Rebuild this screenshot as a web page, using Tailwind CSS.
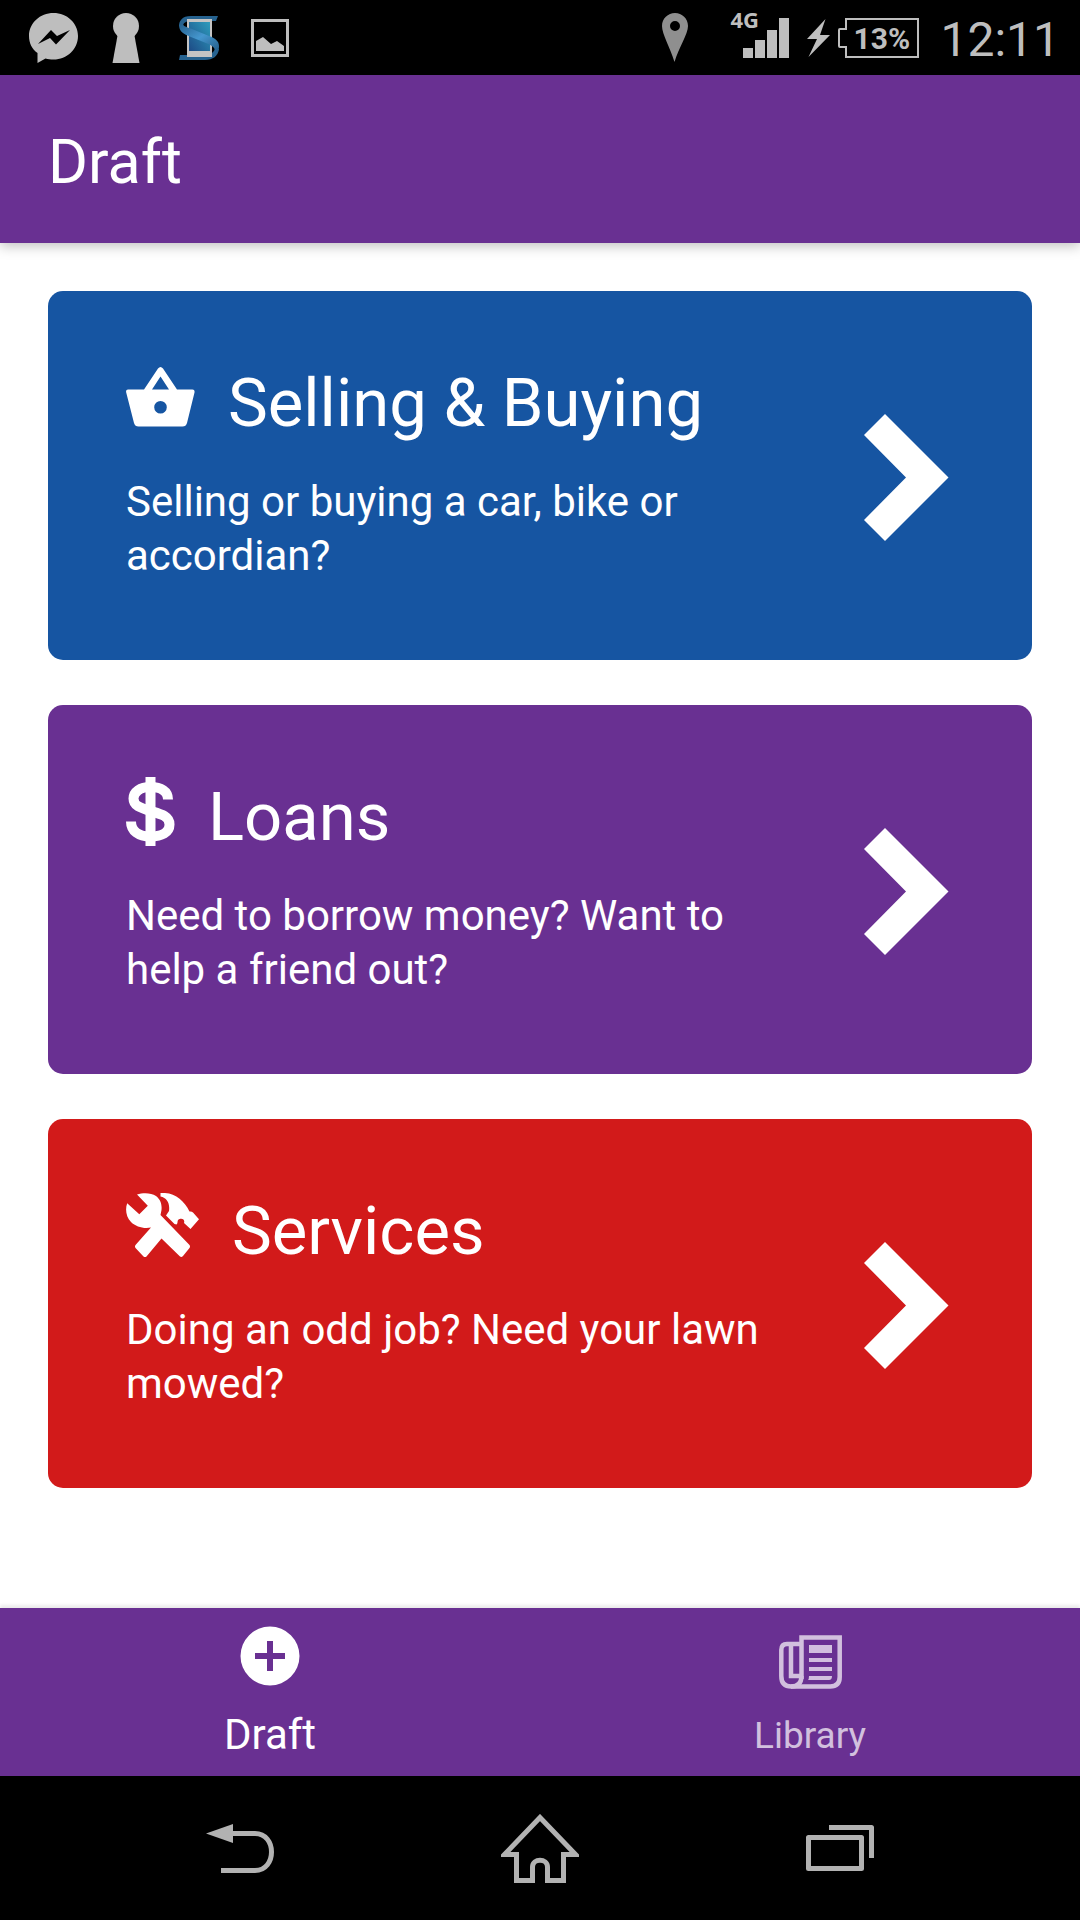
<!DOCTYPE html>
<html lang="en">
<head>
    <meta charset="UTF-8">
    <meta name="viewport" content="width=device-width, initial-scale=1.0">
    <title>Draft</title>
    <script src="https://cdn.jsdelivr.net/npm/@tailwindcss/browser@4"></script>
</head>
<body class="bg-white font-['Roboto',sans-serif] flex flex-col min-h-screen">
    <!-- Status bar -->
    <div class="bg-black text-[#bebebe] h-[75px] flex items-center justify-between pl-[29px] pr-[20px]">
        <div class="flex items-center">
            <svg class="w-[50px] h-[50px]" viewBox="0 0 50 50" fill="currentColor">
                <path d="M24.500 0C11 0 0 10 0 23c0 7 3 13 8.500 17v10l8-4.500c2.500.7 5 1 8 1C38 46.500 49 36 49 23S38 0 24.500 0z"/>
                <path fill="#000" d="M9 31 22 17l6 6 13-6-14 14.500-6-6.500z"/>
            </svg>
            <svg class="w-[28px] h-[50px] ml-[33px]" viewBox="0 0 28 50" fill="currentColor">
                <circle cx="14" cy="13" r="13"/>
                <path d="M6 20h16l5.500 30H.5z"/>
            </svg>
            <svg class="w-[40px] h-[46px] ml-[39px]" viewBox="0 0 40 46">
                <defs>
                    <linearGradient id="screen" x1="1" y1="0" x2="0" y2="1">
                        <stop offset="0" stop-color="#2d9cbc"/>
                        <stop offset="1" stop-color="#1d4a86"/>
                    </linearGradient>
                    <linearGradient id="ribbon" x1="0" y1="0" x2="1" y2="1">
                        <stop offset="0" stop-color="#245f8c"/>
                        <stop offset=".5" stop-color="#4597cf"/>
                        <stop offset="1" stop-color="#225a86"/>
                    </linearGradient>
                </defs>
                <path d="M39 1H12C3 1 0 6 0 11h4c0-3 3-5 8-5h25zM1 40h24c6 0 9-2 11-6h4c-1 7-6 11-14 11H0z" fill="#26628f"/>
                <rect x="8" y="4" width="25" height="38" fill="#c4c4c4"/>
                <rect x="10" y="7" width="21" height="29" fill="url(#screen)"/>
                <path d="M0 10c0 6 4 9 12 12l15 6c7 3 9 5 9 8l2 1c2-2 2-4 2-6 0-5-4-8-10-10L13 14C7 12 4 11 4 9z" fill="url(#ribbon)"/>
            </svg>
            <svg class="w-[38px] h-[38px] ml-[32px]" viewBox="0 0 38 38" fill="currentColor">
                <path fill-rule="evenodd" d="M0 0h38v38H0zM3 3v32h32V3z"/>
                <path d="M5 22l7-4 8 7 6-3 7 5v5H5z"/>
            </svg>
        </div>
        <div class="flex items-center">
            <svg class="w-[26px] h-[49px] text-[#8f8f8f]" viewBox="0 0 26 49" fill="currentColor">
                <path fill-rule="evenodd" d="M13 0C6 0 0 5.500 0 13c0 8 8 21 12.500 36C17 34 26 21 26 13 26 5.500 20 0 13 0zm0 8a5 5 0 110 10 5 5 0 010-10z"/>
            </svg>
            <div class="relative ml-[55px]">
                <span class="absolute left-[-13px] top-[-12px] text-[22px] leading-[26px] font-bold font-['Noto_Sans',sans-serif]">4G</span>
                <svg class="w-[46px] h-[40px]" viewBox="0 0 46 40" fill="currentColor">
                    <path d="M0 30h10v10H0zM12 22h10v18H12zM24 12h10v28H24zM36 0h10v40H36z"/>
                </svg>
            </div>
            <svg class="w-[23px] h-[38px] ml-[18px]" viewBox="0 0 23 38" fill="currentColor">
                <path d="M18.500 0 0 20h10L1.500 38 23 16H13z"/>
            </svg>
            <div class="relative ml-[8px] w-[81px] h-[40px]">
                <svg class="absolute inset-0" viewBox="0 0 81 40" fill="none" stroke="currentColor" stroke-width="2">
                    <path d="M8 1h72v38H8V29H2q-1 0-1-1V12q0-1 1-1h6z"/>
                </svg>
                <span class="absolute left-[15px] top-[3px] text-[30px] leading-[36px] font-bold">13%</span>
            </div>
            <span class="ml-[21px] pt-1 text-[48px] leading-[56px]">12:11</span>
        </div>
    </div>

    <!-- Title bar -->
    <header class="relative bg-[#693092] h-[168px] px-12 pt-1.5 flex items-center shadow-[0_3px_12px_rgba(0,0,0,0.25)]">
        <h1 class="text-white text-[61px] leading-[72px]">Draft</h1>
    </header>

    <!-- Draft categories -->
    <main class="flex-1 px-12 py-12 flex flex-col gap-[45px] text-white">
        <a href="#selling" class="bg-[#1655a2] rounded-[15px] pl-[78px] pr-[83px] pt-[75px] pb-[72px] flex items-center justify-between">
            <div class="w-[660px] pb-[5px]">
                <h2 class="flex items-center gap-[33px] h-[74px] text-[67px] leading-[74px]">
                    <svg class="w-[69px] h-[60px] mb-3" viewBox="0 0 69 60" fill="currentColor">
                        <path fill-rule="evenodd" d="M2 22.500h16L32 1.500q2.500-3 5 0L51 22.500h15.500q2.500 0 2 3L61 56q-1 3.500-4.500 3.500h-44Q9 59.500 8 56L.2 25.500q-.7-3 1.800-3zM26 22.500h17L34.500 9.500zM34.500 34a6.300 6.300 0 100 12.600 6.300 6.300 0 000-12.600z"/>
                    </svg>
                    Selling &amp; Buying
                </h2>
                <p class="mt-[35px] text-[42px] leading-[54px]">Selling or buying a car, bike or accordian?</p>
            </div>
            <svg class="w-[85px] h-[127px]" viewBox="0 0 85 127" fill="currentColor">
                <path d="M21 0 0 21l42 42.500L0 106l21 21 63.500-63.500z"/>
            </svg>
        </a>
        <a href="#loans" class="bg-[#693092] rounded-[15px] pl-[78px] pr-[83px] pt-[75px] pb-[72px] flex items-center justify-between">
            <div class="w-[660px] pb-[5px]">
                <h2 class="flex items-center gap-[33px] h-[74px] text-[67px] leading-[74px]">
                    <svg class="w-[49px] h-[69px] mb-3" viewBox="0 0 49 69" fill="none" stroke="currentColor" stroke-width="10">
                        <path d="M24.500 0v69"/>
                        <path d="M42 22.500C42 14 35 10 24.500 10 14 10 7.500 15 7.500 21.500c0 7.500 7 9.500 17 12.500s19 5 19 13.500c0 8-8 12-19 12-12 0-19.500-5.500-19.500-15"/>
                    </svg>
                    Loans
                </h2>
                <p class="mt-[35px] text-[42px] leading-[54px]">Need to borrow money? Want to help a friend out?</p>
            </div>
            <svg class="w-[85px] h-[127px]" viewBox="0 0 85 127" fill="currentColor">
                <path d="M21 0 0 21l42 42.500L0 106l21 21 63.500-63.500z"/>
            </svg>
        </a>
        <a href="#services" class="bg-[#d21a1a] rounded-[15px] pl-[78px] pr-[83px] pt-[75px] pb-[72px] flex items-center justify-between">
            <div class="w-[660px] pb-[5px]">
                <h2 class="flex items-center gap-[33px] h-[74px] text-[67px] leading-[74px]">
                    <svg class="w-[73px] h-[64px] mb-3" viewBox="0 0 73 64" fill="currentColor">
                        <path d="M11 1.500C17 -.5 25-.5 30 3c5 4 6 9 5.500 14l-1 5L63.500 52q1 1.500 0 3L57 63q-1.500 1.500-3 .500L35.500 45.500 20.500 63.500q-1.500 1-3 0L9.500 55q-1-1.500 0-3L25 34.500C18 36 10 34 5 29 0 24-1 16 1.200 10.300L13.300 21.300 21.800 12.700z"/>
                        <path d="M34.500 0C48-1 58 7 63.500 18.500q2-.5 3.500 1L73 26.300 64.500 36 58 30c1-3-1-5-4.500-4-3 1-1 4-3 5.500L48.500 31 40 22.500l3-4.500C44 10 41 5 34.500 3.500z"/>
                    </svg>
                    Services
                </h2>
                <p class="mt-[35px] text-[42px] leading-[54px]">Doing an odd job? Need your lawn mowed?</p>
            </div>
            <svg class="w-[85px] h-[127px]" viewBox="0 0 85 127" fill="currentColor">
                <path d="M21 0 0 21l42 42.500L0 106l21 21 63.500-63.500z"/>
            </svg>
        </a>
    </main>

    <!-- Tabs -->
    <nav class="bg-[#693092] h-[168px] grid grid-cols-2 shadow-[0_-3px_3px_rgba(0,0,0,0.08)]">
        <a href="#draft" class="flex flex-col items-center pt-[18px] text-white">
            <svg class="w-[60px] h-[60px]" viewBox="0 0 60 60" fill="currentColor">
                <path fill-rule="evenodd" d="M30 .5a29.500 29.500 0 110 59 29.500 29.500 0 010-59zM27 15v12H15v6h12v12h6V33h12v-6H33V15z"/>
            </svg>
            <span class="mt-[22px] text-[42px] leading-[54px]">Draft</span>
        </a>
        <a href="#library" class="flex flex-col items-center pt-[27px] text-[#d2c0de]">
            <svg class="w-[63px] h-[54px]" viewBox="0 0 63 54" fill="none" stroke="currentColor" stroke-width="4.500">
                <path d="M22.500 44V2.500H60.700V42q0 9.500-9.500 9.500H12"/>
                <path d="M22.500 9H8Q2.300 9 2.300 15v26q0 10.500 10 10.500T22.500 41M12 10v31h9"/>
                <path d="M30 10h23v8H30zM30 23h23v4H30zM30 32h23v4H30zM30 41h23q0 4-3 4H29q1-1 1-4z" fill="currentColor" stroke="none"/>
            </svg>
            <span class="mt-[20px] text-[37px] leading-[54px]">Library</span>
        </a>
    </nav>

    <!-- System buttons -->
    <div class="bg-black h-[144px] px-[90px] grid grid-cols-3 items-center justify-items-center text-[#b2b2b2]">
        <button aria-label="Back">
            <svg class="w-[68px] h-[49px]" viewBox="0 0 68 49" fill="none" stroke="currentColor" stroke-width="5">
                <path d="M26 9.500h23c22 0 22 37 0 37H15"/>
                <path d="M0 9.500 27 0v19z" fill="currentColor" stroke="none"/>
            </svg>
        </button>
        <button aria-label="Home">
            <svg class="w-[78px] h-[69px]" viewBox="0 0 78 69" fill="none" stroke="currentColor" stroke-width="5" stroke-linejoin="miter">
                <path d="M39 3.500 3.500 40.500H15.500v26h16V53c0-9 15-9 15 0v13.500h16v-26h12z"/>
            </svg>
        </button>
        <button aria-label="Recent apps">
            <svg class="w-[68px] h-[46px]" viewBox="0 0 68 46" fill="none" stroke="currentColor" stroke-width="5" stroke-linejoin="round">
                <path d="M2.500 12.500h53v31h-53zM23 2.500h42.500V33"/>
            </svg>
        </button>
    </div>
</body>
</html>
